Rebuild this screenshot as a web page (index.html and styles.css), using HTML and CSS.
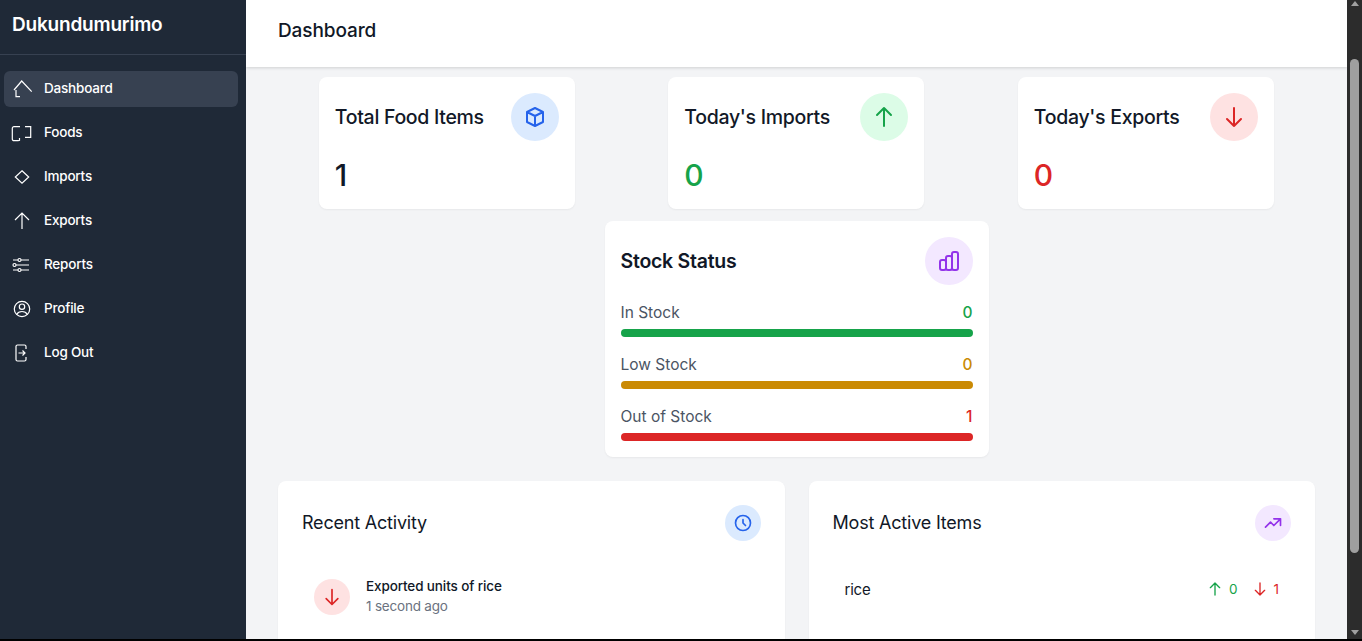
FILE: index.html
```html
<!DOCTYPE html>
<html lang="en">

<head>
    <meta charset="UTF-8">
    <meta name="viewport" content="width=device-width, initial-scale=1.0">
    <title>Dukundumurimo</title>
    <link rel="stylesheet" href="styles.css">
</head>

<body>
    <div class="app">
        <aside class="sidebar">
            <div class="brand">Dukundumurimo</div>
            <nav class="nav">
                <a class="nav-item active">
                    <svg class="nav-icon" viewBox="0 0 24 24"><path d="M4 13 11.700 4 21.700 14.700M6 13v6.700h4"/></svg>
                    Dashboard
                </a>
                <a class="nav-item">
                    <svg class="nav-icon" viewBox="0 0 24 24"><path d="M10 5.700H4A1.700 1.700 0 0 0 2.300 7.400V18A1.700 1.700 0 0 0 4 19.700h4l1.500-.5V17M15 5.700h5.700v10.600H15"/></svg>
                    Foods
                </a>
                <a class="nav-item">
                    <svg class="nav-icon" viewBox="0 0 24 24"><path d="M12 5.700 18.700 12 12 18.300 5.300 12Z"/></svg>
                    Imports
                </a>
                <a class="nav-item">
                    <svg class="nav-icon" viewBox="0 0 24 24"><path d="M12 4V20M5 11 12 4l7 7"/></svg>
                    Exports
                </a>
                <a class="nav-item">
                    <svg class="nav-icon" viewBox="0 0 24 24"><path d="M11 7h8M3 7h5M6 12h13M3 17h5M11 17h8"/><circle cx="9.500" cy="7" r="1.500"/><circle cx="4.500" cy="12" r="1.500"/><circle cx="9.500" cy="17" r="1.500"/></svg>
                    Reports
                </a>
                <a class="nav-item">
                    <svg class="nav-icon" viewBox="0 0 24 24"><circle cx="12" cy="12" r="7.700"/><circle cx="12" cy="9.700" r="2.700"/><path d="M6.700 17.500c1-2 3-3 5.300-3s4.300 1 5.300 3"/></svg>
                    Profile
                </a>
                <a class="nav-item">
                    <svg class="nav-icon" viewBox="0 0 24 24"><path d="M16 8V5.500A1.500 1.500 0 0 0 14.500 4h-7A1.500 1.500 0 0 0 6 5.500v13A1.500 1.500 0 0 0 7.500 20h7a1.500 1.500 0 0 0 1.500-1.500V16M8.500 12H15M12.500 9.500 15 12l-2.500 2.500"/></svg>
                    Log Out
                </a>
            </nav>
        </aside>

        <div class="main">
            <header class="header">Dashboard</header>
            <div class="content">
                <div class="stat-row">
                    <div class="card stat-card">
                        <div class="card-head">
                            <h2>Total Food Items</h2>
                            <span class="badge blue">
                                <svg class="icon" viewBox="0 0 24 24"><path d="M20 7l-8-4-8 4m16 0l-8 4m8-4v10l-8 4m0-10L4 7m8 4v10M4 7v10l8 4"/></svg>
                            </span>
                        </div>
                        <div class="stat-value">1</div>
                    </div>
                    <div class="card stat-card">
                        <div class="card-head">
                            <h2>Today's Imports</h2>
                            <span class="badge green">
                                <svg class="icon" viewBox="0 0 24 24"><path d="M5 10l7-7m0 0l7 7m-7-7v18"/></svg>
                            </span>
                        </div>
                        <div class="stat-value text-green">0</div>
                    </div>
                    <div class="card stat-card">
                        <div class="card-head">
                            <h2>Today's Exports</h2>
                            <span class="badge red">
                                <svg class="icon" viewBox="0 0 24 24"><path d="M19 14l-7 7m0 0l-7-7m7 7V3"/></svg>
                            </span>
                        </div>
                        <div class="stat-value text-red">0</div>
                    </div>
                </div>

                <div class="card stock-card">
                    <div class="card-head">
                        <h2 class="stock-title">Stock Status</h2>
                        <span class="badge purple">
                            <svg class="icon" viewBox="0 0 24 24"><path d="M9 19v-6a2 2 0 00-2-2H5a2 2 0 00-2 2v6a2 2 0 002 2h2a2 2 0 002-2zm0 0V9a2 2 0 012-2h2a2 2 0 012 2v10m-6 0a2 2 0 002 2h2a2 2 0 002-2m0 0V5a2 2 0 012-2h2a2 2 0 012 2v14a2 2 0 01-2 2h-2a2 2 0 01-2-2z"/></svg>
                        </span>
                    </div>
                    <div class="stock-list">
                        <div class="stock-item">
                            <div class="stock-label"><span>In Stock</span><b class="text-green">0</b></div>
                            <div class="bar bg-green"></div>
                        </div>
                        <div class="stock-item">
                            <div class="stock-label"><span>Low Stock</span><b class="text-amber">0</b></div>
                            <div class="bar bg-amber"></div>
                        </div>
                        <div class="stock-item">
                            <div class="stock-label"><span>Out of Stock</span><b class="text-red">1</b></div>
                            <div class="bar bg-red"></div>
                        </div>
                    </div>
                </div>

                <div class="lower-row">
                    <div class="card panel">
                        <div class="card-head">
                            <h3>Recent Activity</h3>
                            <span class="badge small blue">
                                <svg class="icon-sm" viewBox="0 0 24 24"><path d="M12 8v4l3 3m6-3a9 9 0 11-18 0 9 9 0 0118 0z"/></svg>
                            </span>
                        </div>
                        <div class="activity">
                            <span class="badge small red">
                                <svg class="icon-sm" viewBox="0 0 24 24"><path d="M19 14l-7 7m0 0l-7-7m7 7V3"/></svg>
                            </span>
                            <div class="activity-text">
                                <div class="activity-title">Exported units of rice</div>
                                <div class="activity-time">1 second ago</div>
                            </div>
                        </div>
                    </div>
                    <div class="card panel">
                        <div class="card-head">
                            <h3>Most Active Items</h3>
                            <span class="badge small purple">
                                <svg class="icon-sm" viewBox="0 0 24 24"><path d="M13 7h8m0 0v8m0-8l-8 8-4-4-6 6"/></svg>
                            </span>
                        </div>
                        <div class="active-item">
                            <span class="active-name">rice</span>
                            <div class="active-counts">
                                <span class="count text-green">
                                    <svg class="icon-xs" viewBox="0 0 24 24"><path d="M5 10l7-7m0 0l7 7m-7-7v18"/></svg>0
                                </span>
                                <span class="count text-red">
                                    <svg class="icon-xs" viewBox="0 0 24 24"><path d="M19 14l-7 7m0 0l-7-7m7 7V3"/></svg>1
                                </span>
                            </div>
                        </div>
                    </div>
                </div>
            </div>
        </div>

        <div class="scrollbar">
            <span class="arrow-up"></span>
            <span class="thumb"></span>
            <span class="arrow-down"></span>
        </div>
    </div>
    <div class="bottom-edge"></div>
</body>

</html>
```

FILE: styles.css
```css
* {
    box-sizing: border-box;
}

html,
body {
    height: 100%;
}

body {
    margin: 0;
    overflow: hidden;
    font-family: Inter, "Noto Sans", sans-serif;
    color: #111827;
    background-color: #f3f4f6;
}

.app {
    display: flex;
    height: 639px;
}

.bottom-edge {
    height: 2px;
    background-color: #000;
}

/* sidebar */
.sidebar {
    width: 246px;
    flex-shrink: 0;
    background-color: #1f2937;
    color: #fff;
}

.brand {
    height: 55px;
    padding: 12px 12px 0;
    font-size: 19px;
    line-height: 26px;
    font-weight: 600;
    letter-spacing: -0.2px;
    border-bottom: 1px solid #374151;
}

.nav {
    display: flex;
    flex-direction: column;
    gap: 8px;
    padding: 16px 8px 0 4px;
}

.nav-item {
    display: flex;
    align-items: center;
    gap: 10px;
    height: 36px;
    padding: 0 0 2px 6px;
    border-radius: 6px;
    font-size: 13.500px;
    font-weight: 500;
    letter-spacing: -0.2px;
}

.nav-item.active {
    background-color: #374151;
}

.nav-icon {
    width: 24px;
    height: 24px;
    margin-top: 2px;
    fill: none;
    stroke: #fff;
    stroke-width: 1.200;
}

/* main column */
.main {
    flex: 1;
    min-width: 0;
    display: flex;
    flex-direction: column;
    overflow: hidden;
}

.header {
    height: 67px;
    flex-shrink: 0;
    padding: 18px 32px 0;
    font-size: 19px;
    line-height: 26px;
    font-weight: 500;
    letter-spacing: -0.1px;
    background-color: #fff;
    box-shadow: 0 1px 3px rgba(0, 0, 0, 0.15);
    position: relative;
}

.content {
    padding: 10px 32px 0;
}

.card {
    background-color: #fff;
    border-radius: 8px;
    box-shadow: 0 1px 2px rgba(0, 0, 0, 0.05);
}

.card-head {
    display: flex;
    justify-content: space-between;
    align-items: center;
}

.card-head h2 {
    margin: 0;
    font-size: 19.500px;
    font-weight: 500;
    letter-spacing: -0.3px;
}

.card-head h3 {
    margin: 0 0 1px;
    font-size: 18px;
    line-height: 22px;
    font-weight: 400;
    letter-spacing: -0.2px;
}

.badge {
    display: flex;
    align-items: center;
    justify-content: center;
    width: 48px;
    height: 48px;
    flex-shrink: 0;
    border-radius: 50%;
}

.badge.small {
    width: 36px;
    height: 36px;
}

.icon,
.icon-sm,
.icon-xs {
    fill: none;
    stroke: currentColor;
    stroke-width: 2;
    stroke-linecap: round;
    stroke-linejoin: round;
}

.icon {
    width: 24px;
    height: 24px;
}

.icon-sm {
    width: 20px;
    height: 20px;
}

.icon-xs {
    width: 16px;
    height: 16px;
}

.blue {
    background-color: #dbeafe;
    color: #2563eb;
}

.green {
    background-color: #dcfce7;
    color: #16a34a;
}

.red {
    background-color: #fee2e2;
    color: #dc2626;
}

.purple {
    background-color: #f3e8ff;
    color: #9333ea;
}

.text-green {
    color: #16a34a;
}

.text-red {
    color: #dc2626;
}

.text-amber {
    color: #ca8a04;
}

.bg-green {
    background-color: #16a34a;
}

.bg-amber {
    background-color: #ca8a04;
}

.bg-red {
    background-color: #dc2626;
}

/* stat cards */
.stat-row {
    display: flex;
    justify-content: space-between;
    padding: 0 41.200px 0 40.800px;
}

.stat-card {
    width: 256px;
    height: 132px;
    padding: 16px;
}

.stat-value {
    margin-top: 16px;
    font-size: 30px;
    line-height: 36px;
    font-weight: 500;
}

/* stock status */
.stock-card {
    width: 384px;
    height: 236px;
    margin: 12px auto 0;
    padding: 16px;
}

.card-head .stock-title {
    font-weight: 600;
    letter-spacing: -0.25px;
}

.stock-list {
    display: flex;
    flex-direction: column;
    gap: 16px;
    margin-top: 16px;
}

.stock-label {
    display: flex;
    justify-content: space-between;
    font-size: 15.500px;
    line-height: 24px;
    color: #4b5563;
}

.stock-label b {
    font-weight: 500;
}

.bar {
    height: 8px;
    margin-top: 4px;
    border-radius: 4px;
}

/* bottom panels */
.lower-row {
    display: grid;
    grid-template-columns: 1fr 1fr;
    gap: 24px;
    margin-top: 24px;
}

.panel {
    height: 300px;
    padding: 24px;
}

.activity {
    display: flex;
    align-items: flex-start;
    gap: 16px;
    margin-top: 26px;
    padding: 12px;
}

.activity-text {
    margin-top: -3px;
}

.activity-title {
    font-size: 13.500px;
    line-height: 20px;
    font-weight: 500;
    letter-spacing: -0.12px;
}

.activity-time {
    font-size: 13.500px;
    line-height: 20px;
    letter-spacing: -0.2px;
    color: #6b7280;
}

.active-item {
    display: flex;
    justify-content: space-between;
    align-items: center;
    margin-top: 26px;
    padding: 12px;
    height: 44px;
}

.active-name {
    font-size: 15px;
    letter-spacing: -0.2px;
}

.active-counts {
    display: flex;
    gap: 14px;
}

.count {
    display: flex;
    align-items: center;
    gap: 6px;
    font-size: 13.500px;
}

/* page scrollbar */
.scrollbar {
    width: 15px;
    flex-shrink: 0;
    display: flex;
    flex-direction: column;
    align-items: center;
    background-color: #2c2c2c;
}

.arrow-up {
    margin-top: 1px;
    border-left: 4px solid transparent;
    border-right: 4px solid transparent;
    border-bottom: 5px solid #a0a0a0;
}

.thumb {
    width: 9px;
    height: 494px;
    margin-top: 53px;
    border-radius: 5px;
    background-color: #9f9f9f;
}

.arrow-down {
    margin-top: auto;
    margin-bottom: 4px;
    border-left: 4px solid transparent;
    border-right: 4px solid transparent;
    border-top: 5px solid #a0a0a0;
}
```
